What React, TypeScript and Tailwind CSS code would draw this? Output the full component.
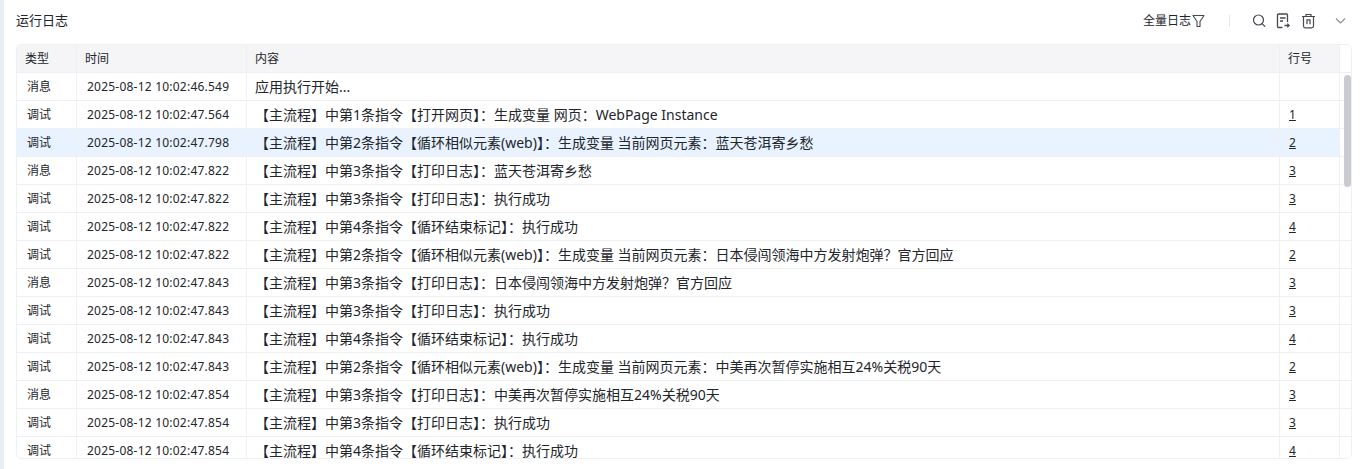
type Log = { type: string; time: string; text: string; line?: number };

const rows: Log[] = [
  { type: "消息", time: "2025-08-12 10:02:46.549", text: "应用执行开始..." },
  { type: "调试", time: "2025-08-12 10:02:47.564", text: "【主流程】中第1条指令【打开网页】：生成变量 网页：WebPage Instance", line: 1 },
  { type: "调试", time: "2025-08-12 10:02:47.798", text: "【主流程】中第2条指令【循环相似元素(web)】：生成变量 当前网页元素：蓝天苍洱寄乡愁", line: 2 },
  { type: "消息", time: "2025-08-12 10:02:47.822", text: "【主流程】中第3条指令【打印日志】：蓝天苍洱寄乡愁", line: 3 },
  { type: "调试", time: "2025-08-12 10:02:47.822", text: "【主流程】中第3条指令【打印日志】：执行成功", line: 3 },
  { type: "调试", time: "2025-08-12 10:02:47.822", text: "【主流程】中第4条指令【循环结束标记】：执行成功", line: 4 },
  { type: "调试", time: "2025-08-12 10:02:47.822", text: "【主流程】中第2条指令【循环相似元素(web)】：生成变量 当前网页元素：日本侵闯领海中方发射炮弹？官方回应", line: 2 },
  { type: "消息", time: "2025-08-12 10:02:47.843", text: "【主流程】中第3条指令【打印日志】：日本侵闯领海中方发射炮弹？官方回应", line: 3 },
  { type: "调试", time: "2025-08-12 10:02:47.843", text: "【主流程】中第3条指令【打印日志】：执行成功", line: 3 },
  { type: "调试", time: "2025-08-12 10:02:47.843", text: "【主流程】中第4条指令【循环结束标记】：执行成功", line: 4 },
  { type: "调试", time: "2025-08-12 10:02:47.843", text: "【主流程】中第2条指令【循环相似元素(web)】：生成变量 当前网页元素：中美再次暂停实施相互24%关税90天", line: 2 },
  { type: "消息", time: "2025-08-12 10:02:47.854", text: "【主流程】中第3条指令【打印日志】：中美再次暂停实施相互24%关税90天", line: 3 },
  { type: "调试", time: "2025-08-12 10:02:47.854", text: "【主流程】中第3条指令【打印日志】：执行成功", line: 3 },
  { type: "调试", time: "2025-08-12 10:02:47.854", text: "【主流程】中第4条指令【循环结束标记】：执行成功", line: 4 },
];

const App = () => {
  return (
    <div className="flex h-[469px] w-[1361px] overflow-hidden bg-white font-['Noto_Sans','Noto_Sans_CJK_SC',sans-serif] text-[#22252b]">
      <div className="w-1 shrink-0 bg-[#e9edf6]" />
      <div className="flex min-w-0 flex-1 flex-col pr-[9px] pl-3">
        <div className="flex h-11 shrink-0 items-center justify-between pb-[3px]">
          <span className="text-[13px]">运行日志</span>
          <div className="mr-1 flex items-center text-[#45484f]">
            <span className="text-xs text-[#22252b]">全量日志</span>
            <svg width="13" height="14" viewBox="0 0 13 14" fill="none" stroke="currentColor" strokeWidth="1.1" className="ml-px">
              <path d="M1 1.500h11L8 7.500V12.500H5V7.500Z" strokeLinejoin="round" />
            </svg>
            <div className="mr-[22px] ml-6 h-3 w-px bg-[#e5e6eb]" />
            <svg width="14" height="15" viewBox="0 0 14 15" fill="none" stroke="currentColor" strokeWidth="1.2">
              <circle cx="6.500" cy="7" r="5" />
              <path d="M10.300 10.800l2.500 2.500" strokeLinecap="round" />
            </svg>
            <svg width="14" height="16" viewBox="0 0 14 16" fill="none" stroke="currentColor" strokeWidth="1.300" className="ml-[10px]">
              <path d="M6.500 14.500H2.500a1 1 0 0 1-1-1V2a1 1 0 0 1 1-1h8a1 1 0 0 1 1 1v7M4 5h5.500M4 8h3M8.500 12.500h4.500M11.300 10.600l1.900 1.900-1.900 1.900" />
            </svg>
            <svg width="15" height="16" viewBox="0 0 15 16" fill="none" stroke="currentColor" strokeWidth="1.2" className="ml-[11px]">
              <path d="M1 3.500h13M5 3.500V1.500h5v2M2.500 3.500V13a1.800 1.800 0 0 0 1.800 1.800h6.400A1.800 1.800 0 0 0 12.500 13V3.500M6 6.800v4.500M9 6.800v4.500M5.500 6.800h4" />
            </svg>
            <svg width="15" height="15" viewBox="0 0 15 15" fill="none" stroke="#8a8e96" strokeWidth="1.1" className="ml-[17px]">
              <path d="M3 5.500l4.500 4.500L12 5.500" />
            </svg>
          </div>
        </div>
        <div className="relative mb-[10px] min-h-0 flex-1 overflow-hidden rounded-[5px] border border-[#eff0f2]">
          <div className="flex h-7 border-b border-[#eff0f2] bg-[#f5f5f7] text-xs">
            <div className="flex w-[60px] items-center border-r border-[#eff0f2] pl-2">类型</div>
            <div className="flex w-[170px] items-center border-r border-[#eff0f2] pl-2">时间</div>
            <div className="flex flex-1 items-center border-r border-[#eff0f2] pl-2">内容</div>
            <div className="flex w-[60px] items-center border-r border-[#eff0f2] pl-2">行号</div>
            <div className="w-[11px] bg-white" />
          </div>
          {rows.map((r, i) => (
            <div key={i} className={`flex h-7 border-b border-[#eff0f2] ${i === 2 ? "bg-[#e8f3ff]" : ""}`}>
              <div className="flex w-[60px] items-center border-r border-[#eff0f2] pl-[10px] text-xs">{r.type}</div>
              <div className="flex w-[170px] items-center border-r border-[#eff0f2] pl-[10px] text-xs tracking-[0.22px]">{r.time}</div>
              <div className="flex flex-1 items-center border-r border-[#eff0f2] pl-2 text-sm whitespace-nowrap">{r.text}</div>
              <div className="flex w-[60px] items-center border-r border-[#eff0f2] pl-[9px] text-xs underline">{r.line}</div>
              <div className="w-[11px] bg-white" />
            </div>
          ))}
          <div className="absolute top-[30px] right-0 h-[112px] w-[7px] rounded bg-[#c9cbd1]" />
        </div>
      </div>
    </div>
  );
};

export default App;
